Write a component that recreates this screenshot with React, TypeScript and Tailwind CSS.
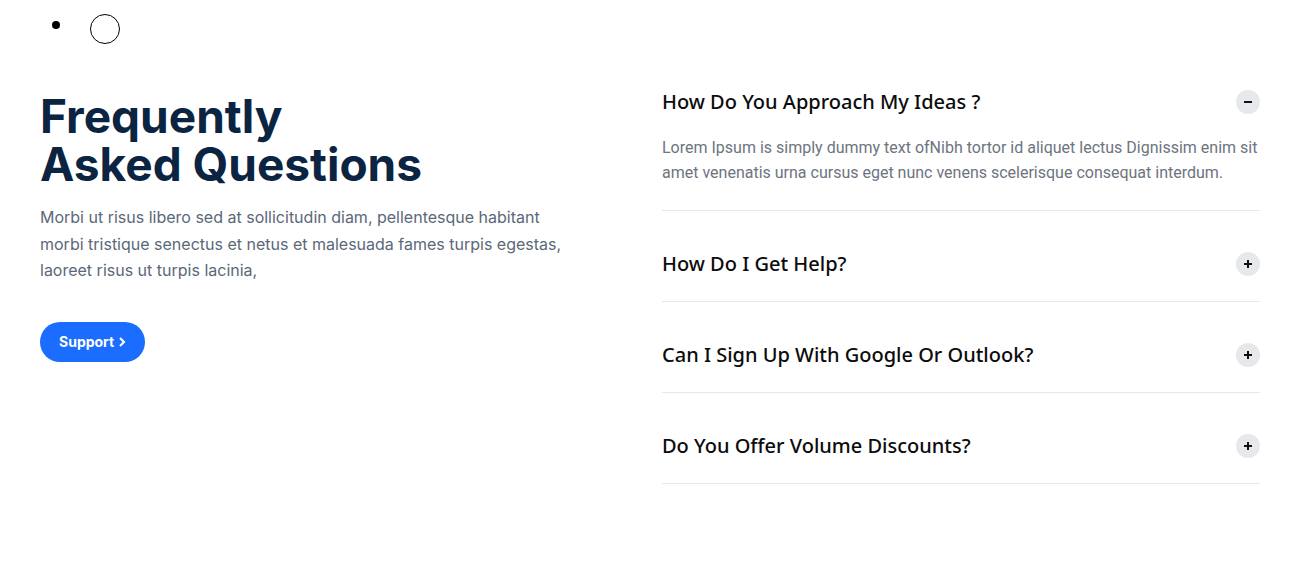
import { useState } from "react";

const faqs = [
  {
    q: "How Do You Approach My Ideas ?",
    a: "Lorem Ipsum is simply dummy text ofNibh tortor id aliquet lectus Dignissim enim sit amet venenatis urna cursus eget nunc venens scelerisque consequat interdum.",
  },
  { q: "How Do I Get Help?", a: "" },
  { q: "Can I Sign Up With Google Or Outlook?", a: "" },
  { q: "Do You Offer Volume Discounts?", a: "" },
];

function Toggle({ open }: { open: boolean }) {
  return (
    <span className="flex size-6 shrink-0 items-center justify-center rounded-full bg-[#e6e8ec]">
      <svg width="10" height="10" viewBox="0 0 10 10" fill="none">
        <path d="M1 5h8" stroke="#111" strokeWidth="2" />
        {!open && <path d="M5 1v8" stroke="#111" strokeWidth="2" />}
      </svg>
    </span>
  );
}

export default function App() {
  const [open, setOpen] = useState(0);

  return (
    <div className="min-h-[567px] bg-white font-['Inter',sans-serif]">
      {/* leftover nav markers */}
      <div className="flex h-[58px] items-start pl-[52px] pt-[14px]">
        <span className="mt-[7px] size-[8px] rounded-full bg-black" />
        <span className="ml-[30px] size-[30px] rounded-full border border-black" />
      </div>

      <section className="grid grid-cols-[598px_598px] gap-6 pl-10">
        <div className="pt-[34px]">
          <h2 className="text-[46px] font-bold leading-[48px] text-[#0b2442]">
            Frequently
            <br />
            Asked Questions
          </h2>
          <p className="mt-[16px] max-w-[540px] text-base leading-[26.5px] text-[#5b6878]">
            Morbi ut risus libero sed at sollicitudin diam, pellentesque habitant morbi tristique
            senectus et netus et malesuada fames turpis egestas, laoreet risus ut turpis lacinia,
          </p>
          <button className="mt-[38px] flex h-10 items-center gap-1 rounded-full bg-[#1a6dff] px-[19px] text-sm font-bold text-white">
            Support
            <svg width="8" height="12" viewBox="0 0 8 12" fill="none">
              <path d="M2 2l4 4-4 4" stroke="white" strokeWidth="2" />
            </svg>
          </button>
        </div>

        <div className="pt-[29px]">
          {faqs.map((f, i) => (
            <div key={f.q} className={`border-b border-[#e7e8eb] ${i === 0 ? "" : "pt-[38px]"}`}>
              <button
                onClick={() => setOpen(open === i ? -1 : i)}
                className="flex h-[30px] w-full items-center justify-between text-left"
              >
                <span className="font-['Noto_Sans',sans-serif] text-[20px] font-medium text-[#0c0c0c]">
                  {f.q}
                </span>
                <Toggle open={open === i} />
              </button>
              {open === i && f.a ? (
                <p className="pb-[25px] pt-[18px] font-['Roboto',sans-serif] text-[16px] leading-[25px] text-[#6d7480]">
                  {f.a}
                </p>
              ) : (
                <div className="h-[22px]" />
              )}
            </div>
          ))}
        </div>
      </section>
    </div>
  );
}
